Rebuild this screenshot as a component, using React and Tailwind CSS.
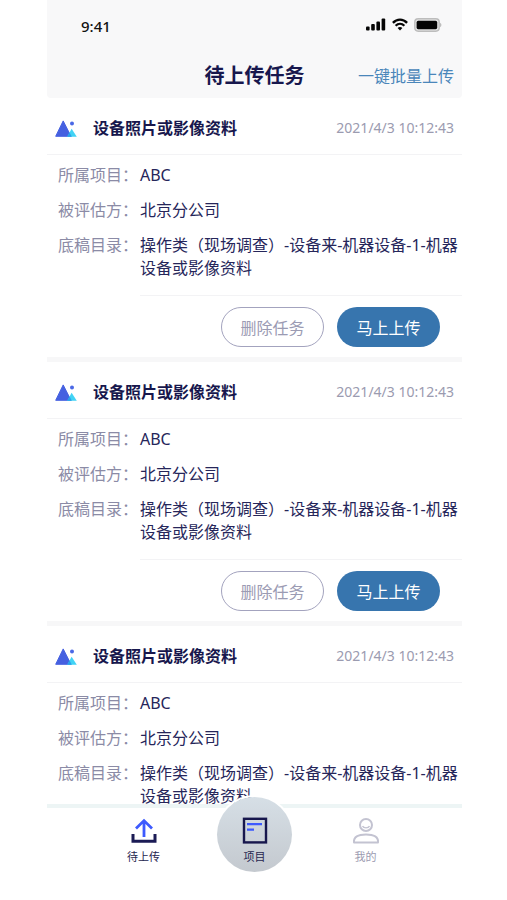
const tasks = [
  {
    id: 1,
    title: "设备照片或影像资料",
    time: "2021/4/3 10:12:43",
    project: "ABC",
    company: "北京分公司",
    catalog: "操作类（现场调查）-设备来-机器设备-1-机器设备或影像资料",
  },
  {
    id: 2,
    title: "设备照片或影像资料",
    time: "2021/4/3 10:12:43",
    project: "ABC",
    company: "北京分公司",
    catalog: "操作类（现场调查）-设备来-机器设备-1-机器设备或影像资料",
  },
  {
    id: 3,
    title: "设备照片或影像资料",
    time: "2021/4/3 10:12:43",
    project: "ABC",
    company: "北京分公司",
    catalog: "操作类（现场调查）-设备来-机器设备-1-机器设备或影像资料",
  },
];

function StatusBar() {
  return (
    <div className="flex h-[52px] items-center justify-between pl-[34px] pr-5 pt-px">
      <span className="text-[15px] font-medium text-[#111]">9:41</span>
      <div className="flex items-center gap-1.5 pb-1">
        <svg width="20" height="13" viewBox="0 0 20 13" fill="#050505">
          <rect x="0" y="8.5" width="3.6" height="4" rx="1" />
          <rect x="5.2" y="6" width="3.6" height="6.5" rx="1" />
          <rect x="10.4" y="3.5" width="3.6" height="9" rx="1" />
          <rect x="15.6" y="0.5" width="3.6" height="12" rx="1" />
        </svg>
        <svg width="16" height="13" viewBox="0 0 16 13" fill="none" stroke="#050505">
          <path d="M0.9 4.8C5 0.6 11 0.6 15.1 4.8" strokeWidth="2.4" />
          <path d="M3.6 7.8C6.2 5.3 9.8 5.3 12.4 7.8" strokeWidth="2.2" />
          <path d="M5.6 10C7 8.8 9 8.8 10.4 10L8 12.4Z" fill="#050505" stroke="none" />
        </svg>
        <svg width="28" height="14" viewBox="0 0 28 14">
          <rect x="0.8" y="0.8" width="24.4" height="12.4" rx="3.4" fill="#e4e4e4" stroke="#bdbdbd" strokeWidth="1.4" />
          <rect x="2.6" y="2.8" width="20.6" height="8.4" rx="1.6" fill="#050505" />
          <path d="M26.2 4.8C27.8 5.6 27.8 8.4 26.2 9.2Z" fill="#b0b0b0" />
        </svg>
      </div>
    </div>
  );
}

function PictureIcon() {
  return (
    <svg width="22" height="17" viewBox="0 0 22 17">
      <path d="M8.2 0.9L16 16.3H0.7Z" fill="#4560e0" stroke="#4560e0" strokeLinejoin="round" />
      <path d="M16.6 8.8L21.8 16.8H12.2Z" fill="#41d3f5" />
      <path d="M14.5 12.3L16.8 16.8H12.2Z" fill="#2aa0ea" />
      <circle cx="17" cy="3.6" r="2" fill="#4a68e6" />
    </svg>
  );
}

function Field({ label, children }) {
  return (
    <div className="flex">
      <dt className="w-[82px] shrink-0 text-[#8b8ba6]">{label}：</dt>
      <dd className="min-w-0 flex-1 text-[#26265a]">{children}</dd>
    </div>
  );
}

function TaskCard({ task }) {
  return (
    <article className="border-b-[5px] border-[#f7f7f8]">
      <div className="flex h-[57px] items-center border-b border-[#f3f3f5] pl-2 pr-2 pt-1">
        <PictureIcon />
        <h2 className="ml-4 flex-1 text-base font-bold text-[#17174d]">{task.title}</h2>
        <time className="text-sm text-[#9b9bb0]">{task.time}</time>
      </div>
      <dl className="flex flex-col gap-3 pb-[15px] pl-[11px] pt-[9px] text-base leading-[23px]">
        <Field label="所属项目">{task.project}</Field>
        <Field label="被评估方">{task.company}</Field>
        <Field label="底稿目录">{task.catalog}</Field>
      </dl>
      <div className="ml-[93px] flex justify-end gap-[13px] border-t border-[#f3f3f5] pb-2.5 pr-[22px] pt-[11px]">
        <button type="button" className="h-10 w-[103px] rounded-full border border-[#a3a3be] pt-0.5 text-base text-[#9b9bb3]">
          删除任务
        </button>
        <button type="button" className="h-10 w-[103px] rounded-full bg-[#3775ae] pt-0.5 text-base text-white">
          马上上传
        </button>
      </div>
    </article>
  );
}

function TabBar() {
  return (
    <nav className="relative flex h-24 shrink-0 justify-center gap-9 border-t-4 border-[#edf5f5] bg-white text-[11px] leading-4">
      <a href="#upload" className="flex w-[75px] flex-col items-center gap-[5px] pt-2.5 text-[#26264f]">
        <svg width="26" height="26" viewBox="0 0 26 26" fill="none">
          <path d="M2 16V23.2H24V16" stroke="#1b1b55" strokeWidth="3" />
          <path d="M13 19V3M5 10.5L13 2.6L21 10.5" stroke="#3d5afe" strokeWidth="2.8" />
        </svg>
        <span>待上传</span>
      </a>
      <a
        href="#project"
        className="-mt-[11px] flex size-[75px] flex-col items-center gap-[5px] rounded-full bg-linear-to-b from-[#d6dfe6] to-[#c4c9cf] pt-5 text-[#26264f] ring-2 ring-white"
      >
        <svg width="26" height="27" viewBox="0 0 26 27" fill="none">
          <rect x="2" y="1.8" width="22" height="23.6" stroke="#17174d" strokeWidth="2.4" />
          <path d="M5 7.2H20M5 12.6H12" stroke="#3d5afe" strokeWidth="2.2" />
        </svg>
        <span>项目</span>
      </a>
      <a href="#mine" className="flex w-[75px] flex-col items-center gap-[5px] pt-2.5 text-[#9b9bb0]">
        <svg width="28" height="26" viewBox="0 0 28 26" fill="none" stroke="#c3c3d1" strokeWidth="2">
          <circle cx="14" cy="7" r="6" />
          <path d="M10.5 8.2C11.8 10.4 16.2 10.4 17.5 8.2" strokeWidth="1.4" />
          <path d="M2 24.4C1.4 19 6 16.4 14 16.4S26.6 19 26 24.4Z" strokeLinejoin="round" />
        </svg>
        <span>我的</span>
      </a>
    </nav>
  );
}

export default function App() {
  return (
    <div lang="zh-CN" className="h-screen bg-white pl-[47px] pr-[45px] font-['Noto_Sans','Noto_Sans_CJK_SC',sans-serif]">
      <div className="flex h-full flex-col">
        <header className="shrink-0 rounded-b bg-[#f8f8f9]">
          <StatusBar />
          <div className="grid h-[46px] grid-cols-[1fr_auto_1fr] items-center pt-0.5">
            <h1 className="col-start-2 text-xl font-bold text-[#17174d]">待上传任务</h1>
            <button type="button" className="mr-2 justify-self-end whitespace-nowrap text-base text-[#4a86ba]">
              一键批量上传
            </button>
          </div>
        </header>
        <main className="min-h-0 flex-1 overflow-y-auto [scrollbar-width:none]">
          {tasks.map((task) => (
            <TaskCard key={task.id} task={task} />
          ))}
        </main>
        <TabBar />
      </div>
    </div>
  );
}
